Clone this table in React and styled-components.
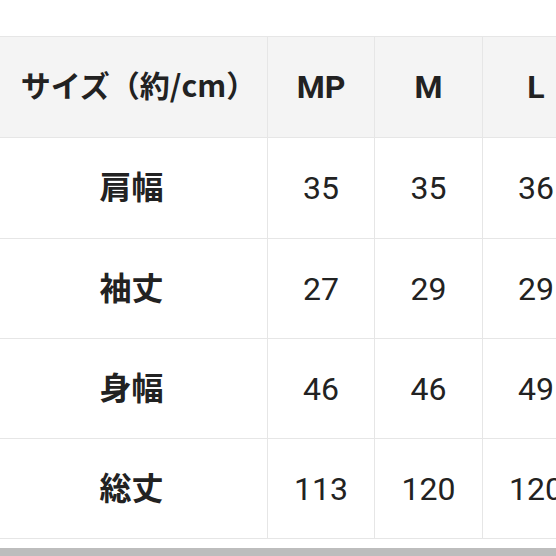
import React from 'react';
import styled, { createGlobalStyle } from 'styled-components';

const GlobalStyle = createGlobalStyle`
  html, body {
    margin: 0;
    padding: 0;
    background: #ffffff;
  }
  body {
    font-family: Roboto, "Noto Sans CJK JP", sans-serif;
    color: #222222;
  }
`;

const Page = styled.div`
  width: 556px;
  height: 556px;
  overflow: hidden;
  display: flex;
  flex-direction: column;
  background: #ffffff;
`;

const Table = styled.div`
  margin-top: 36px;
  border-top: 1px solid #e6e6e6;
  display: flex;
  flex-direction: column;
`;

const Row = styled.div`
  display: grid;
  grid-template-columns: 268px 107px 108px 107px;
  height: ${p => p.h}px;
  border-bottom: 1px solid #e6e6e6;
  background: ${p => (p.head ? '#f4f4f4' : '#ffffff')};
`;

const Cell = styled.div`
  display: flex;
  align-items: center;
  justify-content: center;
  border-right: 1px solid #e6e6e6;
  font-family: Roboto, "Noto Sans CJK JP", sans-serif;
  font-size: 32px;
  font-weight: ${p => (p.bold ? 700 : 400)};
  color: #222222;
  white-space: nowrap;
`;

const Label = styled.span`
  margin-left: ${p => (p.head ? '10px' : '-4px')};
  margin-bottom: 6px;
  font-family: ${p => (p.head ? '"Noto Sans CJK JP", sans-serif' : 'Roboto, "Noto Sans CJK JP", sans-serif')};
  font-size: ${p => (p.head ? '30px' : '32px')};
`;

const BottomBar = styled.div`
  margin-top: auto;
  height: 8px;
  background: #bdbdbd;
`;

const sizes = ['MP', 'M', 'L'];

const rows = [
  { name: '肩幅', values: ['35', '35', '36'] },
  { name: '袖丈', values: ['27', '29', '29'] },
  { name: '身幅', values: ['46', '46', '49'] },
  { name: '総丈', values: ['113', '120', '120'] },
];

const App = () => (
  <Page>
    <GlobalStyle />
    <Table>
      <Row head h={100}>
        <Cell bold><Label head>サイズ（約/cm）</Label></Cell>
        {sizes.map(s => (
          <Cell bold key={s}>{s}</Cell>
        ))}
      </Row>
      {rows.map((r, i) => (
        <Row key={r.name} h={i < 1 ? 100 : 99}>
          <Cell bold><Label>{r.name}</Label></Cell>
          {r.values.map((v, j) => (
            <Cell key={j}>{v}</Cell>
          ))}
        </Row>
      ))}
    </Table>
    <BottomBar />
  </Page>
);

export default App;
